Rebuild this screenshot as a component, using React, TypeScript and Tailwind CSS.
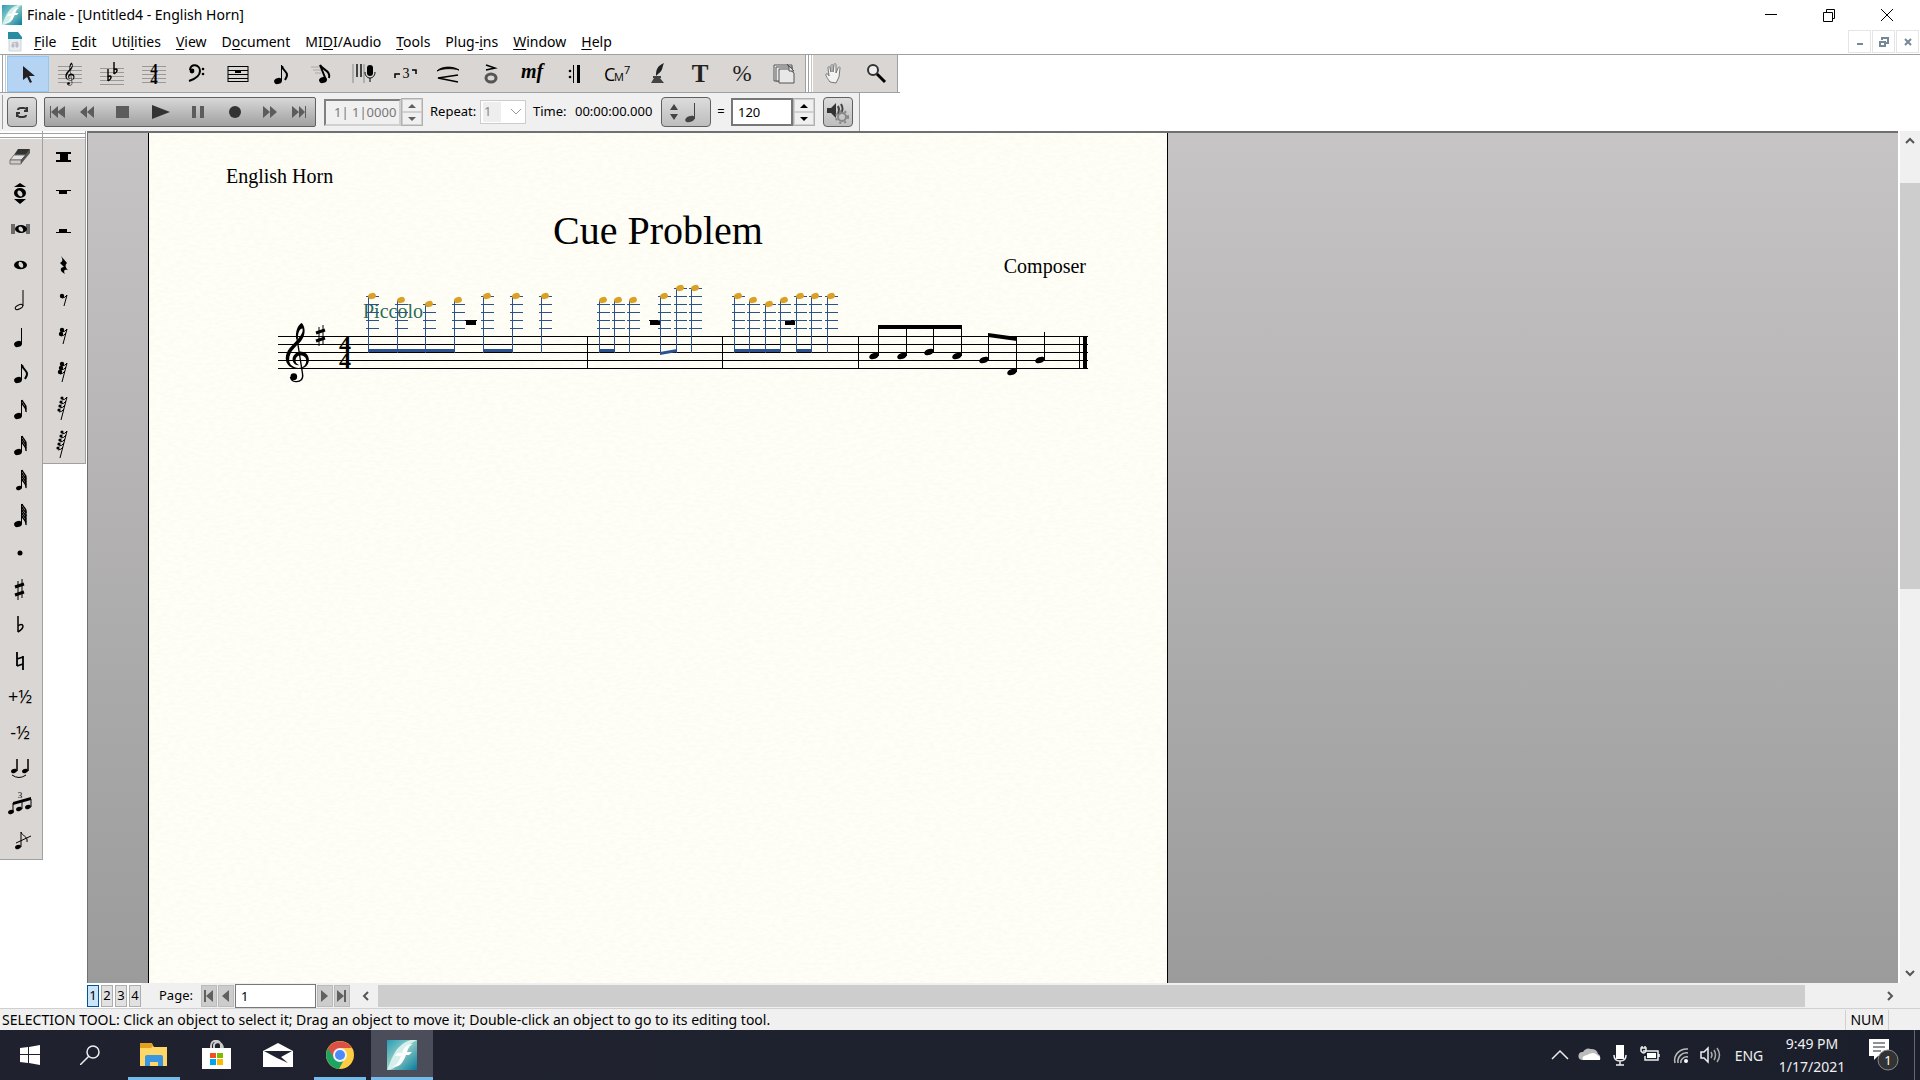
import React from "react";

const CLEF_FILL =
    "M128 165 C141 180 138 204 124 221 C108 238 91 250 90 274 C90 290 102 298 118 299 L118 302 C96 302 80 290 80 270 C80 245 100 232 115 214 C127 200 132 192 130 182 C126 180 116 188 116 212 L111 212 C108 190 116 170 128 165Z M118 302 C138 302 149 290 149 275 C149 258 136 250 123 250 C106 252 98 268 101 278 C103 287 112 292 120 291 C111 286 109 282 109 276 C110 267 115 262 124 262 C134 262 141 268 141 277 C141 291 132 299 118 299Z";

const Clef = () => (
    <g>
        <path d={CLEF_FILL} />
        <path d="M113 208 L130 316 C133 332 124 341 110 340 C101 339 95 334 94 326" fill="none" stroke="currentColor" strokeWidth="4" />
        <circle cx="104" cy="325" r="10" />
    </g>
);

const Sharp = () => (
    <g fill="none" stroke="currentColor">
        <path d="M3 3v19M7 1v19" strokeWidth="1" />
        <path d="M0 9l9-3M0 17l9-3" strokeWidth="3" />
    </g>
);

const Icon = ({ children, w = 30, h = 34, viewBox = "0 0 30 34" }) => (
    <svg width={w} height={h} viewBox={viewBox} fill="currentColor" aria-hidden="true" className="shrink-0">
        {children}
    </svg>
);

const stroke = { fill: "none", stroke: "currentColor" };

const Lines = ({ from = 9 }) => (
    <g fill="#9a9896" shapeRendering="crispEdges">
        {[0, 1, 2, 3, 4].map((i) => (
            <rect key={i} x="3" y={from + i * 4} width="24" height="1" />
        ))}
    </g>
);

const Head = ({ x, y, rx = 4, ry = 3 }) => (
    <ellipse cx={x} cy={y} rx={rx} ry={ry} transform={`rotate(-20 ${x} ${y})`} />
);

// plain note with the given number of flags
const Note = ({ flags = 0, top = 8, small = false }) => (
    <g>
        <Head x={small ? 14 : 13} y={24} rx={small ? 3 : 4} ry={small ? 2 : 3} />
        <rect x="16" y={top} width="1" height={24 - top} />
        {[...Array(flags)].map((_, i) => (
            <path
                key={i}
                d={
                    flags === 1
                        ? "M17 9c1 5 5 5 5 9c0 2-1 3-2 5"
                        : `M17 ${top + i * 3}c1 4 5 4 4 9`
                }
                {...stroke}
                strokeWidth={flags === 1 ? 2 : 1.4}
            />
        ))}
    </g>
);

const ShortRest = ({ n }) => {
    const top = 17 - n * 2 - 4;
    return (
        <g>
            <path d={`M19 ${top}L${17 - n} ${top + n * 4 + 7}`} {...stroke} />
            {[...Array(n)].map((_, i) => (
                <g key={i}>
                    <circle cx={14 - i} cy={top + 1 + i * 4} r={n > 3 ? 1.6 : 2.2} />
                    <path d={`M${14 - i} ${top + 3 + i * 4}q3 0 5-3`} {...stroke} />
                </g>
            ))}
        </g>
    );
};

const mainTools = [
    { name: "Selection", icon: <path d="M10 9v14l4-3 3 6 2-1-3-6h6z" fill="#222" /> },
    {
        name: "Staff",
        icon: (
            <g>
                <Lines />
                <svg x="9" y="5" width="12" height="24" viewBox="78 162 74 182"><Clef /></svg>
            </g>
        ),
    },
    {
        name: "Key Signature",
        icon: (
            <g>
                <Lines from={11} />
                <path d="M11 12v12M11 20c3-3 5 1 0 4M17 5v12M17 13c3-3 5 1 0 4" {...stroke} strokeWidth="1.4" />
            </g>
        ),
    },
    {
        name: "Time Signature",
        icon: (
            <g>
                <Lines />
                <text x="15" y="17" fontSize="15" fontWeight="700" textAnchor="middle" fontFamily="Liberation Serif, serif">4</text>
                <text x="15" y="27" fontSize="15" fontWeight="700" textAnchor="middle" fontFamily="Liberation Serif, serif">4</text>
            </g>
        ),
    },
    {
        name: "Clef",
        icon: (
            <g>
                <circle cx="11" cy="14" r="2.4" />
                <path d="M9 13c0-7 10-6 10 1c0 5-5 8-11 10" {...stroke} strokeWidth="2" />
                <circle cx="22" cy="12" r="1.3" />
                <circle cx="22" cy="17" r="1.3" />
            </g>
        ),
    },
    {
        name: "Measure",
        icon: (
            <g>
                <path d="M5 9.500h20M5 13.500h20M5 17.500h20M5 21.500h20M5 24.500h20M5 9v16M25 9v16" {...stroke} />
                <rect x="12" y="13" width="6" height="3" />
            </g>
        ),
    },
    { name: "Simple Entry", icon: <Note flags={1} /> },
    {
        name: "Speedy Entry",
        icon: (
            <g>
                <path d="M4 10h9M6 13h8M8 16h6" stroke="#aaa" />
                <Head x={16} y={23} />
                <path d="M19 23L13 8c3 5 11 6 9 13" {...stroke} strokeWidth="2" />
            </g>
        ),
    },
    {
        name: "HyperScribe",
        icon: (
            <g>
                <path d="M4 7v19M15 7v19" stroke="#888" />
                <path d="M8 7v13M12 7v13" stroke="#444" strokeWidth="2" />
                <rect x="18" y="8" width="6" height="11" rx="3" />
                <path d="M16 15c0 8 10 8 10 0M21 21v4" {...stroke} />
            </g>
        ),
    },
    {
        name: "Tuplet",
        icon: (
            <g>
                <path d="M4 21v-4h5M21 13h4v4" {...stroke} strokeWidth="1.500" />
                <text x="15" y="21" fontSize="14" textAnchor="middle" fontFamily="Liberation Serif, serif">3</text>
            </g>
        ),
    },
    {
        name: "Smart Shape",
        icon: (
            <g>
                <path d="M4 14C9 9 20 9 26 13C20 11 10 11 4 14Z" stroke="currentColor" />
                <path d="M25 18L5 21l20 4" {...stroke} strokeWidth="1.500" />
            </g>
        ),
    },
    {
        name: "Articulation",
        icon: (
            <g>
                <path d="M11 8l9 3-9 2" {...stroke} strokeWidth="1.500" />
                <ellipse cx="16" cy="21" rx="5" ry="4" fill="none" stroke="#555" strokeWidth="3" />
            </g>
        ),
    },
    {
        name: "Expression",
        icon: <text x="15" y="21" fontSize="20" fontWeight="700" fontStyle="italic" textAnchor="middle" fontFamily="Liberation Serif, serif">mf</text>,
    },
    {
        name: "Repeat",
        icon: (
            <g>
                <circle cx="11" cy="14" r="1.300" />
                <circle cx="11" cy="20" r="1.300" />
                <rect x="14" y="8" width="1" height="18" />
                <rect x="18" y="8" width="3" height="18" />
            </g>
        ),
    },
    {
        name: "Chord",
        icon: (
            <g fontFamily="Open Sans, sans-serif">
                <text x="3" y="24" fontSize="18">C</text>
                <text x="13" y="24" fontSize="11">M</text>
                <text x="23" y="17" fontSize="11">7</text>
            </g>
        ),
    },
    {
        name: "Lyrics",
        icon: (
            <g fill="#444">
                <path d="M21 6C14 9 13 13 13 19l2-2C20 14 19 10 21 6Z" fill="#222" />
                <path d="M10 19h8v2h-1l4 5H8l3-5h-1z" />
            </g>
        ),
    },
    {
        name: "Text",
        icon: <text x="15" y="25" fontSize="25" fontWeight="700" textAnchor="middle" fill="#222" fontFamily="Liberation Serif, serif">T</text>,
    },
    {
        name: "Resize",
        icon: <text x="15" y="24" fontSize="23" textAnchor="middle" fill="#222" fontFamily="Liberation Serif, serif">%</text>,
    },
    {
        name: "Page Layout",
        icon: (
            <g fill="#e8e8e8" stroke="#555">
                <path d="M5 8h18v16H5z" />
                <path d="M7 10h16v14H7z" />
                <path d="M10 12h10l5 4v10H10z" />
                <path d="M18 7l7 7h-5v-4z" />
            </g>
        ),
    },
];

const viewTools = [
    {
        name: "Hand Grabber",
        icon: (
            <path
                d="M11 25c-2-3-5-7-4-8s3 1 3 2l-1-8c0-2 2-2 2 0l1 4V9c0-2 2-2 2 0v6l1-7c0-2 2-2 2 0v8l2-5c1-2 2-1 2 0l-1 9-3 6z"
                fill="#f2f2f2"
                stroke="#777"
            />
        ),
    },
    {
        name: "Zoom",
        icon: (
            <g>
                <circle cx="12" cy="13" r="5" fill="#eee" stroke="#333" strokeWidth="2" />
                <path d="M16 17l8 8" stroke="#000" strokeWidth="3" />
            </g>
        ),
    },
];

const entryTools = [
    {
        name: "Eraser",
        icon: (
            <g>
                <path d="M13 9h12l-4 6H9z" fill="#333" />
                <path d="M9 15h12l-5 5H5z" fill="#e2e2e2" stroke="#777" />
                <path d="M5 20h11v4H5z" fill="#ccc" stroke="#777" />
                <path d="M25 9v4l-9 11v-4z" fill="#555" />
            </g>
        ),
    },
    {
        name: "Repitch",
        icon: (
            <g>
                <path d="M9 11l6-4 6 4zM9 23l6 5 6-5z" />
                <path fillRule="evenodd" d="M9 17a6 5 0 1 0 12 0a6 5 0 1 0-12 0zM13 15c2-2 6 3 4 5s-6-3-4-5z" />
            </g>
        ),
    },
    {
        name: "Double Whole Note",
        icon: (
            <g>
                <path d="M7 12v10M9 12v10M22 12v10M24 12v10" {...stroke} />
                <path fillRule="evenodd" d="M10 17a6 4 0 1 0 12 0a6 4 0 1 0-12 0zM14 15c2-2 5 2 4 4s-6-1-4-4z" />
            </g>
        ),
    },
    {
        name: "Whole Note",
        icon: <path fillRule="evenodd" d="M9 17a6 4 0 1 0 13 0a6 4 0 1 0-13 0zM14 14c3-1 5 3 4 5s-6-1-4-5z" />,
    },
    {
        name: "Half Note",
        icon: (
            <g {...stroke}>
                <ellipse cx="14" cy="23" rx="4" ry="2" transform="rotate(-25 14 23)" />
                <path d="M18 22V6" strokeWidth="1" />
            </g>
        ),
    },
    { name: "Quarter Note", icon: <Note /> },
    { name: "Eighth Note", icon: <Note flags={1} /> },
    { name: "16th Note", icon: <Note flags={2} /> },
    { name: "32nd Note", icon: <Note flags={3} /> },
    { name: "64th Note", icon: <Note flags={4} top={6} small /> },
    { name: "128th Note", icon: <Note flags={5} top={4} /> },
    { name: "Dot", icon: <circle cx="15" cy="17" r="2.500" /> },
    { name: "Sharp", icon: <g transform="translate(10 6)"><Sharp /></g> },
    { name: "Flat", icon: <path d="M13 8v16M13 18c5-4 8 1 0 6" {...stroke} strokeWidth="1.500" /> },
    { name: "Natural", icon: <path d="M12 8v14M18 12v14M12 15l6-2M12 22l6-2" {...stroke} strokeWidth="1.800" /> },
    { name: "Half Step Up", icon: <text x="15" y="23" fontSize="18" textAnchor="middle" fontFamily="Open Sans, sans-serif">+½</text> },
    { name: "Half Step Down", icon: <text x="15" y="23" fontSize="18" textAnchor="middle" fontFamily="Open Sans, sans-serif">-½</text> },
    {
        name: "Tie",
        icon: (
            <g>
                <Head x={9} y={19} rx={3} ry={2} />
                <Head x={20} y={19} rx={3} ry={2} />
                <path d="M12 19V7M23 19V7" {...stroke} strokeWidth="1.500" />
                <path d="M7 23q7 5 14 0" {...stroke} />
            </g>
        ),
    },
    {
        name: "Tuplet",
        icon: (
            <g>
                <Head x={6} y={24} rx={3} ry={2} />
                <Head x={14} y={21} rx={3} ry={2} />
                <Head x={23} y={19} rx={3} ry={2} />
                <path d="M8 24v-9M17 21v-8M26 19v-8" {...stroke} />
                <path d="M8 14l18-5v3L8 17z" />
                <text x="15" y="10" fontSize="9" textAnchor="middle" fontFamily="Liberation Serif, serif">3</text>
            </g>
        ),
    },
    {
        name: "Grace Note",
        icon: (
            <g>
                <Head x={13} y={23} rx={3} ry={2} />
                <path d="M16 23V8c1 4 7 4 6 10M11 19l15-7" {...stroke} />
            </g>
        ),
    },
];

const restTools = [
    { name: "Double Whole Rest", icon: <path d="M8 12h15v2H8zM8 20h15v2H8zM12 13h8v8h-8z" /> },
    { name: "Whole Rest", icon: <path d="M8 14h15v1H8zM11 15h8v3h-8z" /> },
    { name: "Half Rest", icon: <path d="M8 20h15v1H8zM11 17h8v3h-8z" /> },
    { name: "Quarter Rest", icon: <path d="M13 8l6 7c-2 2-2 4 1 7c-3-1-5 0-3 4c-6-3-5-7-1-7l-4-4c3-2 3-3 1-7z" /> },
    { name: "Eighth Rest", icon: <ShortRest n={1} /> },
    { name: "16th Rest", icon: <ShortRest n={2} /> },
    { name: "32nd Rest", icon: <ShortRest n={3} /> },
    { name: "64th Rest", icon: <ShortRest n={4} /> },
    { name: "128th Rest", icon: <ShortRest n={5} /> },
];

const menus = [
    ["", "F", "ile"],
    ["", "E", "dit"],
    ["Uti", "l", "ities"],
    ["", "V", "iew"],
    ["D", "o", "cument"],
    ["MI", "D", "I/Audio"],
    ["", "T", "ools"],
    ["Plug-", "i", "ns"],
    ["", "W", "indow"],
    ["", "H", "elp"],
];

const transport = [
    { name: "Rewind to start", w: "w-7", icon: <path d="M6 11h1v12H6zM7 17l7-6v12zM13 17l8-6v12z" /> },
    { name: "Rewind", w: "w-8", icon: <path d="M6 17l7-6v12zM13 17l7-6v12z" /> },
    { name: "Stop", w: "w-9", icon: <path d="M8 11h13v12H8z" /> },
    { name: "Play", w: "w-10", icon: <path d="M6 10l18 7-18 7z" fill="#333" /> },
    { name: "Pause", w: "w-9", icon: <path d="M8 11h4v12H8zM16 11h4v12h-4z" /> },
    { name: "Record", w: "w-9", icon: <circle cx="15" cy="17" r="6" fill="#333" /> },
    { name: "Fast forward", w: "w-8", icon: <path d="M9 11l7 6-7 6zM16 11l7 6-7 6z" /> },
    { name: "Forward to end", w: "w-7", icon: <path d="M8 11l7 6-7 6zM15 11l6 6-6 6zM21 11h1v12h-1z" /> },
];

// [stem x, head y] of every cue note
const cueNotes = [
    [369, 298], [398, 302], [426, 306], [455, 302], [484, 298], [513, 298], [542, 298],
    [600, 302], [615, 302], [630, 302], [661, 298], [677, 290], [692, 290],
    [735, 298], [750, 302], [766, 306], [781, 302], [797, 298], [812, 298], [828, 298],
];
const cueBeams = [[369, 456], [484, 514], [600, 616], [735, 782], [797, 813]];

// [head x, head y, stem top]
const notes = [
    [875, 358, 328], [903, 358, 328], [930, 354, 328], [958, 358, 328],
    [985, 362, 336], [1013, 374, 340], [1041, 362, 334],
];

const FinaleLogo = ({ size }) => (
    <svg width={size} height={size} viewBox="0 0 30 30" aria-hidden="true" className="shrink-0">
        <defs>
            <linearGradient id={`logo${size}`} x1="0" y1="0" x2="1" y2="1">
                <stop offset="0" stopColor="#2a9bb5" />
                <stop offset=".45" stopColor="#8fcdc6" />
                <stop offset="1" stopColor="#087a9c" />
            </linearGradient>
        </defs>
        <rect width="30" height="30" fill={`url(#logo${size})`} />
        <path d="M0 30C5 20 7 5 24 0h6C20 4 16 14 12 22c-3 5-6 8-12 8z" fill="#d5efeb" />
        <path d="M4 26c5 1 8-4 11-13c2-6 5-9 11-9c-4 2-5 5-6 8h5l-3 3h-3c-3 8-7 14-15 11z" fill="#fff" />
        <path d="M10 13h6l-2 3H8z" fill="#fff" />
    </svg>
);

const Score = () => (
    <svg width="1018" height="120" viewBox="150 280 1018 120" className="block" role="img" aria-label="Staff">
        <g shapeRendering="crispEdges">
            {[338, 346, 354, 362, 370].map((y) => (
                <rect key={y} x="279" y={y} width="810" height="1" />
            ))}
            {[588, 723, 859, 1080].map((x) => (
                <rect key={x} x={x} y="338" width="1" height="33" />
            ))}
            <rect x="1084" y="338" width="4" height="33" />
            {[466, 650, 785].map((x) => (
                <g key={x}>
                    <rect x={x} y="322" width="12" height="1" />
                    <rect x={x + 1} y="322" width="10" height="5" />
                </g>
            ))}
        </g>
        <svg x="286" y="324" width="25" height="61" viewBox="78 162 74 182"><Clef /></svg>
        <g transform="translate(317 326)"><Sharp /></g>
        <g fontFamily="Liberation Serif, serif" fontSize="24" fontWeight="700">
            <text x="340" y="354">4</text>
            <text x="340" y="370">4</text>
        </g>
        <text x="364" y="320" fontSize="20" fill="#2d6b58" fontFamily="Liberation Serif, serif">Piccolo</text>
        {cueNotes.map(([x, y]) => (
            <g key={x}>
                <g fill="#2b528f" shapeRendering="crispEdges">
                    {[290, 298, 306, 314, 322, 330].filter((l) => l >= y).map((l) => (
                        <rect key={l} x={x - 2} y={l} width="13" height="1" />
                    ))}
                    <rect x={x} y={y} width="1" height={355 - y} />
                </g>
                <g fill="#daa126"><Head x={x + 4} y={y} /></g>
            </g>
        ))}
        <g fill="#2b528f">
            {cueBeams.map(([a, b]) => (
                <rect key={a} x={a} y="351" width={b - a} height="3" />
            ))}
            <path d="M661 354l17-3v3l-17 3z" />
        </g>
        {notes.map(([x, y, top]) => (
            <g key={x}>
                <Head x={x} y={y} rx={5} ry={3} />
                <rect x={x + 4} y={top} width="1" height={y - top} shapeRendering="crispEdges" />
            </g>
        ))}
        <rect x="879" y="327" width="84" height="4" />
        <path d="M989 335l29 4v4l-29-4z" />
    </svg>
);

const ToolGroup = ({ tools, active }: any) => (
    <div className="flex items-end border-r border-[#a0a0a0] bg-[#d9d6d3]">
        {tools.map((t) => (
            <button
                key={t.name}
                aria-label={t.name}
                className={`flex h-9 w-[42px] items-center justify-center ${
                    t.name === active ? "border border-[#90c8f6] bg-[#b5d4f4]" : ""
                }`}
            >
                <Icon>{t.icon}</Icon>
            </button>
        ))}
    </div>
);

const Grip = () => (
    <div className="flex w-[7px] gap-[2px] pl-[2px]">
        <div className="w-px bg-[#a0a0a0]" />
        <div className="w-px bg-[#c8c8c8]" />
    </div>
);

const Palette = ({ tools }) => (
    <div className="w-[43px] self-start border-r border-b border-[#a0a0a0] bg-[#d9d6d3]">
        <div className="flex h-2 flex-col justify-center gap-px bg-white">
            <div className="h-px bg-[#a0a0a0]" />
            <div className="h-px bg-white" />
            <div className="h-px bg-[#a0a0a0]" />
        </div>
        {tools.map((t) => (
            <button key={t.name} aria-label={t.name} className="flex h-9 w-10 items-center justify-center">
                <Icon>{t.icon}</Icon>
            </button>
        ))}
    </div>
);

const Spinner = ({ label, color = "text-[#606060]" }) => (
    <div className={`flex w-[22px] flex-col border border-[#b0b0b0] ${color}`}>
        {["up", "down"].map((dir) => (
            <button
                key={dir}
                aria-label={`${label} ${dir}`}
                className="flex flex-1 items-center justify-center border border-[#d0d0d0] bg-[#f0f0f0]"
            >
                <svg width="8" height="4" viewBox="0 0 8 4" fill="currentColor">
                    <path d={dir === "up" ? "M0 4l4-4 4 4z" : "M0 0l4 4 4-4z"} />
                </svg>
            </button>
        ))}
    </div>
);

const grayButton =
    "flex items-center justify-center rounded-sm border border-[#606060] bg-linear-to-b from-[#dcdcdc] to-[#bdbdbd] text-[#444]";

const Chevron = ({ d }) => (
    <svg width="10" height="10" viewBox="0 0 10 10" fill="none" stroke="#555" strokeWidth="2" aria-hidden="true">
        <path d={d} />
    </svg>
);

const taskApps = [
    {
        name: "File Explorer",
        open: true,
        icon: (
            <svg width="30" height="30" viewBox="0 0 30 30">
                <path d="M1 4h12l2 3h13v19H1z" fill="#ffd766" />
                <path d="M1 3h12l1 3-2 2H1z" fill="#e0a020" />
                <path d="M6 26V17q0-2 2-2h14q2 0 2 2v9h-5v-4h-8v4z" fill="#3a96e0" />
            </svg>
        ),
    },
    {
        name: "Microsoft Store",
        icon: (
            <svg width="30" height="30" viewBox="0 0 30 30">
                <path d="M10 9V6c0-7 10-7 10 0v3M13 8V5c1-4 8-4 9 3" fill="none" stroke="#ccc" strokeWidth="2" />
                <path d="M1 8h29v21H1z" fill="#fff" />
                <path d="M9 13h6v5H9z" fill="#f25022" />
                <path d="M16 13h6v5h-6z" fill="#7fba00" />
                <path d="M9 19h6v6H9z" fill="#00a4ef" />
                <path d="M16 19h6v6h-6z" fill="#ffb900" />
            </svg>
        ),
    },
    {
        name: "Mail",
        icon: (
            <svg width="30" height="30" viewBox="0 0 30 30">
                <path d="M0 11L15 3l15 8v16H0z" fill="#fff" />
                <path d="M1 11h28L18 17l7 6-11-5z" fill="#1f2230" />
            </svg>
        ),
    },
    {
        name: "Google Chrome",
        open: true,
        icon: (
            <svg width="28" height="28" viewBox="0 0 28 28">
                <circle cx="14" cy="14" r="14" fill="#ffcd40" />
                <path d="M14 14L2 7A14 14 0 0 0 13 28l6-11z" fill="#1da462" />
                <path d="M14 7h12A14 14 0 0 0 2 7l6 10z" fill="#dd5144" />
                <circle cx="14" cy="14" r="7" fill="#f1f1f1" />
                <circle cx="14" cy="14" r="5" fill="#4c8bf5" />
            </svg>
        ),
    },
    { name: "Finale", open: true, active: true, icon: <FinaleLogo size={30} /> },
];

const TitleBar = () => (
    <header className="flex h-[29px] items-center pr-1 text-sm">
        <div className="flex flex-1 items-center gap-[5px] pl-[2px]">
            <FinaleLogo size={20} />
            <h1>Finale - [Untitled4 - English Horn]</h1>
        </div>
        {[
            ["Minimize", "M3 8.500h12"],
            ["Restore", "M3.500 6.500h9v9h-9zM6.500 6V3.500h8v9h-2"],
            ["Close", "M3 3l12 12M15 3L3 15"],
        ].map(([name, d]) => (
            <button key={name} aria-label={name} className="flex h-full w-[58px] items-center justify-center">
                <svg width="18" height="18" viewBox="0 0 18 18" fill="none" stroke="#000">
                    <path d={d} />
                </svg>
            </button>
        ))}
    </header>
);

const MenuBar = () => (
    <nav className="flex h-[26px] items-center border-b border-[#a0a0a0] text-sm">
        <svg width="14" height="20" viewBox="0 0 14 20" className="ml-2 mr-[5px]" aria-hidden="true">
            <path d="M1 1h8l4 4v14H1z" fill="#e8eef0" stroke="#ccd4d8" />
            <path d="M0 0h10l4 5v2H0z" fill="#2a8ca0" />
            <path d="M4 12h2v3H4zM8 11h2v4H8zM4 11l6-1" fill="#bbc" stroke="#bbc" />
        </svg>
        <div className="flex flex-1 gap-px">
            {menus.map(([a, key, b]) => (
                <button key={a + key + b} className="px-[7px]">
                    {a}
                    <span className="underline underline-offset-2">{key}</span>
                    {b}
                </button>
            ))}
        </div>
        <div className="flex gap-px pr-px">
            {[
                ["Minimize document", "M3 8h6"],
                ["Restore document", "M2 6h5v4H2zM4 4V2h6v5H8"],
                ["Close document", "M3 3l6 6M9 3L3 9"],
            ].map(([name, d]) => (
                <button
                    key={name}
                    aria-label={name}
                    className="flex size-[23px] items-center justify-center border border-[#e5e5e5]"
                >
                    <svg width="12" height="12" viewBox="0 0 12 12" fill="none" stroke="#76879a" strokeWidth="2">
                        <path d={d} />
                    </svg>
                </button>
            ))}
        </div>
    </nav>
);

const PlaybackBar = () => (
    <section aria-label="Playback" className="flex h-[38px] w-[860px] items-center border-r border-[#a0a0a0] bg-[#f0f0f0] text-[13px]">
        <div className="flex h-full w-[7px] items-center pl-[2px]">
            <div className="h-[34px] w-px bg-[#a0a0a0]" />
        </div>
        <button aria-label="Loop" className={`${grayButton} h-[30px] w-[30px]`}>
            <svg width="16" height="16" viewBox="0 0 16 16" fill="none" stroke="#333" strokeWidth="2">
                <path d="M4 6q0-2 3-2h3q2 0 3 2M3 10q1 3 3 3h3q3 0 3-2M13 3v4h-3M3 13V9h3" />
            </svg>
        </button>
        <div className="ml-[7px] flex h-[30px] w-[272px] items-center rounded-xs border border-[#606060] bg-linear-to-b from-[#d8d8d8] to-[#a0a0a0] text-[#5c5c5c]">
            {transport.map((t) => (
                <button key={t.name} aria-label={t.name} className={`${t.w} flex items-center justify-center`}>
                    <Icon h={26} viewBox="0 4 30 26">{t.icon}</Icon>
                </button>
            ))}
        </div>
        <input
            aria-label="Measure counter"
            defaultValue="1| 1|0000"
            className="ml-2 h-[27px] w-[77px] border-2 border-[#d0d0d0] border-t-[#808080] border-l-[#808080] pl-2 text-[#777]"
        />
        <div className="flex h-[28px]">
            <Spinner label="Counter" />
        </div>
        <label htmlFor="repeat" className="ml-[7px] w-[50px]">Repeat:</label>
        <div className="flex h-6 w-[46px] items-center border border-[#ccc] bg-white">
            <select id="repeat" className="ml-[2px] h-5 w-[18px] appearance-none bg-[#eee] pl-px text-[#888]">
                <option>1</option>
            </select>
            <svg width="10" height="6" viewBox="0 0 10 6" fill="none" stroke="#999" className="ml-[10px]">
                <path d="M0 0l5 5 5-5" />
            </svg>
        </div>
        <span className="ml-[7px] w-[42px]">Time:</span>
        <time className="w-[86px]">00:00:00.000</time>
        <button aria-label="Beat unit" className={`${grayButton} h-[30px] w-[50px]`}>
            <svg width="40" height="26" viewBox="0 0 40 26" fill="currentColor">
                <path d="M4 11l4-6 4 6zM4 15l4 6 4-6z" />
                <Head x={24} y={20} rx={5} ry={3} />
                <rect x="28" y="4" width="1" height="16" />
            </svg>
        </button>
        <label htmlFor="tempo" className="w-5 text-center">=</label>
        <input id="tempo" defaultValue="120" className="h-7 w-[62px] border-2 border-[#777] bg-white pl-[5px]" />
        <div className="flex h-[28px]">
            <Spinner label="Tempo" color="text-black" />
        </div>
        <button aria-label="Playback settings" className={`${grayButton} ml-2 h-[30px] w-[30px]`}>
            <svg width="26" height="26" viewBox="0 0 26 26">
                <path d="M2 9h4l5-5v15l-5-5H2z" fill="#333" />
                <path d="M13 7q2 4 0 8M16 5q3 5 0 9" fill="none" stroke="#444" strokeWidth="2" />
                <circle cx="17" cy="18" r="4" fill="none" stroke="#888" strokeWidth="2" />
                <circle cx="17" cy="18" r="6" fill="none" stroke="#888" strokeWidth="2" strokeDasharray="2 3" />
            </svg>
        </button>
    </section>
);

const Page = () => (
    <main className="relative w-[1020px] border-x border-black bg-[#fffff8] font-['Liberation_Serif',serif] text-xl leading-6 text-black">
        <svg className="absolute inset-0 h-full w-full" aria-hidden="true">
            <filter id="grain">
                <feTurbulence type="fractalNoise" baseFrequency="0.15 0.4" numOctaves="2" />
                <feColorMatrix values="0 0 0 0 .8  0 0 0 0 .78  0 0 0 0 .6  .3 0 0 0 -.09" />
            </filter>
            <rect width="100%" height="100%" filter="url(#grain)" />
        </svg>
        <div className="relative pt-[31px]">
            <p className="pl-[77px]">English Horn</p>
            <h2 className="pt-[23px] text-center text-[40px] leading-10">Cue Problem</h2>
            <p className="pt-[3px] pr-[81px] text-right">Composer</p>
            <Score />
        </div>
    </main>
);

const navButton = "flex h-[22px] w-4 items-center justify-center border border-[#bbb] bg-[#ccc]";

const BottomBar = () => (
    <div className="flex h-[25px] pl-[87px] text-[13px]">
        <div className="flex gap-[2px] pt-[2px]">
            {["1", "2", "3", "4"].map((n) => (
                <button
                    key={n}
                    className={`h-[22px] w-3 border ${
                        n === "1" ? "border-[#005499] bg-[#cce4f7]" : "border-[#adadad] bg-[#e1e1e1]"
                    }`}
                >
                    {n}
                </button>
            ))}
        </div>
        <div className="flex flex-1 items-center bg-[#f0f0f0]">
            <label htmlFor="page" className="w-[60px] pl-[18px]">Page:</label>
            <div className="flex items-center gap-px text-[#606060]">
                <button aria-label="First page" className={navButton}>
                    <svg width="12" height="12" fill="currentColor"><path d="M1 0h2v12H1zM3 6l7-6v12z" /></svg>
                </button>
                <button aria-label="Previous page" className={navButton}>
                    <svg width="8" height="12" fill="currentColor"><path d="M0 6l7-6v12z" /></svg>
                </button>
                <input id="page" defaultValue="1" className="h-6 w-[81px] border border-[#777] bg-white pl-[5px] text-black" />
                <button aria-label="Next page" className={navButton}>
                    <svg width="8" height="12" fill="currentColor"><path d="M7 6L0 0v12z" /></svg>
                </button>
                <button aria-label="Last page" className={navButton}>
                    <svg width="12" height="12" fill="currentColor"><path d="M1 0l7 6-7 6zM8 0h2v12H8z" /></svg>
                </button>
            </div>
            <div className="flex h-[22px] flex-1 items-center">
                <button aria-label="Scroll left" className="flex w-7 justify-center pl-1">
                    <Chevron d="M7 1L3 5l4 4" />
                </button>
                <div className="flex h-full flex-1">
                    <div className="w-[95%] bg-[#cdcdcd]" />
                </div>
                <button aria-label="Scroll right" className="mr-5 flex w-5 justify-center">
                    <Chevron d="M3 1l4 4-4 4" />
                </button>
            </div>
        </div>
    </div>
);

const TaskBar = () => (
    <footer className="flex h-[50px] items-stretch bg-linear-to-r from-[#20212f] via-[#1e222e] to-[#1b1f2b] text-[#f0f0f0]">
        <button aria-label="Start" className="flex w-[60px] items-center justify-center">
            <svg width="20" height="20" viewBox="0 0 20 20" fill="#fff">
                <path d="M0 3l8-1v7H0zM9 2l11-2v9H9zM0 10h8v8l-8-1zM9 10h11v10L9 18z" />
            </svg>
        </button>
        <button aria-label="Search" className="flex w-[63px] items-center pl-5">
            <svg width="20" height="20" viewBox="0 0 20 20" fill="none" stroke="#eee" strokeWidth="1.500">
                <circle cx="13" cy="7" r="6" />
                <path d="M9 11l-9 9" />
            </svg>
        </button>
        {taskApps.map((app) => (
            <button
                key={app.name}
                aria-label={app.name}
                className={`flex w-[62px] flex-col items-center ${app.active ? "bg-[#4b4d5b]" : ""}`}
            >
                <span className="flex h-[47px] items-center justify-center pt-[2px]">{app.icon}</span>
                <span className={`h-[3px] ${app.active ? "w-full" : "w-[52px]"} ${app.open ? "bg-[#76b9ed]" : ""}`} />
            </button>
        ))}
        <div className="flex flex-1 items-center justify-end text-sm leading-[23px]">
            <svg width="177" height="24" viewBox="0 0 177 24" fill="none" stroke="#eee" strokeWidth="1.500" aria-hidden="true">
                <path d="M2 16l8-8 8 8" />
                <path d="M32 17a4 4 0 0 1 1-8q3-5 8-3q6 0 7 5q3 1 2 6z" fill="#bbb" stroke="none" />
                <path d="M33 17q-2-4 4-5q7-4 10 0q4 1 3 5z" fill="#fff" stroke="none" />
                <rect x="66" y="2" width="8" height="14" fill="#fff" stroke="none" />
                <path d="M64 12q0 6 6 6t6-6M70 18v4M66 22h8" />
                <path d="M93 8h15v9H95v-4M109 11v3M91 5h5v3q-2 4-5 0zM92 5V3M95 5V3" />
                <path d="M97 10h9v5h-9z" fill="#fff" stroke="none" />
                <path d="M125 20C123 12 130 5 138 6M128 20C127 14 132 9 138 10M131 20C130 17 134 13 138 14" stroke="#bbb" />
                <circle cx="136" cy="18" r="2" fill="#fff" stroke="none" />
                <path d="M151 9h3l4-4v14l-4-4h-3z" />
                <path d="M161 9q2 3 0 6M164 7q3 5 0 10M167 5q5 7 0 14" stroke="#aaa" />
            </svg>
            <span className="w-11 text-center">ENG</span>
            <div className="w-[82px] text-center">
                <p>9:49 PM</p>
                <p>1/17/2021</p>
            </div>
            <button aria-label="Notifications, 1 new" className="ml-1 flex w-[50px] justify-center">
                <svg width="34" height="32" viewBox="0 0 34 32">
                    <path d="M4 0h20v17H13l-4 4v-4H4z" fill="#fff" />
                    <path d="M8 4h12M8 8h12M8 12h8" stroke="#20242f" />
                    <circle cx="23" cy="21" r="10" fill="#333" stroke="#888" />
                    <text x="23" y="26" fontSize="13" textAnchor="middle" fill="#fff" fontFamily="Noto Sans, sans-serif">1</text>
                </svg>
            </button>
            <div className="ml-[7px] h-full w-[6px] border-l border-[#666]" />
        </div>
    </footer>
);

const App = () => {
    return (
        <div className="flex h-screen flex-col overflow-hidden bg-white font-['Noto_Sans',sans-serif] text-black">
            <TitleBar />
            <MenuBar />
            <div className="flex h-[38px] w-[900px] border-b border-[#a0a0a0]">
                <Grip />
                <ToolGroup tools={mainTools} active="Selection" />
                <Grip />
                <ToolGroup tools={viewTools} />
            </div>
            <PlaybackBar />
            <div className="flex min-h-0 flex-1">
                <div className="flex w-[87px]">
                    <Palette tools={entryTools} />
                    <Palette tools={restTools} />
                </div>
                <div className="flex flex-1 border-t-2 border-l border-[#707070] bg-linear-to-b from-[#c7c4c5] to-[#9b9b9b] pl-[60px]">
                    <Page />
                </div>
                <div className="ml-[2px] flex w-5 flex-col items-center bg-[#f0f0f0]">
                    <button aria-label="Scroll up" className="flex h-5 items-center">
                        <Chevron d="M1 7l4-4 4 4" />
                    </button>
                    <div className="flex w-full flex-1 flex-col pt-8">
                        <div className="h-[52%] w-full bg-[#cdcdcd]" />
                    </div>
                    <button aria-label="Scroll down" className="flex h-5 items-center">
                        <Chevron d="M1 3l4 4 4-4" />
                    </button>
                </div>
            </div>
            <BottomBar />
            <div className="flex h-[22px] items-center border-t border-[#d0d0d0] bg-[#f0f0f0] text-sm">
                <p className="flex-1 pl-[2px]">
                    SELECTION TOOL: Click an object to select it; Drag an object to move it; Double-click an object to go to its editing tool.
                </p>
                <span className="mr-[31px] border-x border-[#d0d0d0] px-1">NUM</span>
            </div>
            <TaskBar />
        </div>
    );
};

export default App;
